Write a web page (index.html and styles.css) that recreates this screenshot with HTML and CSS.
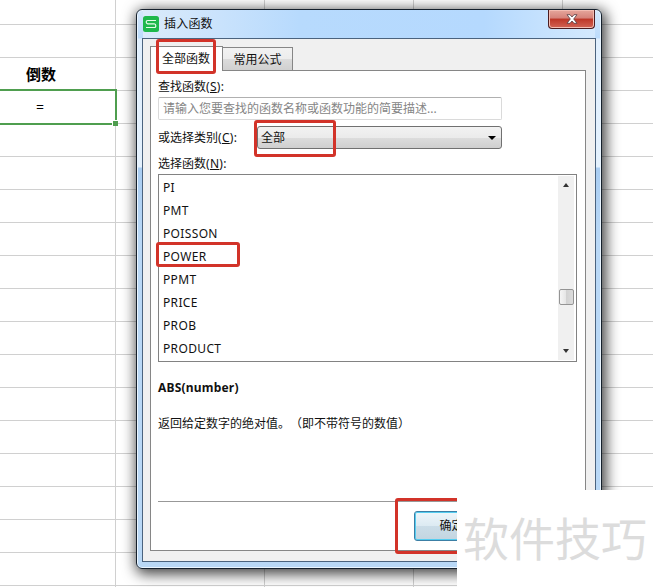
FILE: index.html
```html
<!DOCTYPE html>
<html lang="zh-CN">
<head>
<meta charset="utf-8">
<title>插入函数</title>
<link rel="stylesheet" href="styles.css">
</head>
<body>
<main class="sheet">
  <div class="cell cell-head">倒数</div>
  <div class="cell cell-active">=<span class="fill-handle"></span></div>
</main>

<section class="dialog">
  <header class="titlebar">
    <svg class="logo" viewBox="0 0 16 16"><rect width="16" height="16" rx="2.500" fill="#1fb84c"/><path d="M13 4.500H4.700Q3.200 4.500 3.200 6T4.700 7.900H11.300Q12.800 7.900 12.800 9.800T11.300 11.500H3" fill="none" stroke="#e8fbe9" stroke-width="1.200"/></svg>
    <h1 class="title">插入函数</h1>
    <button class="close"><svg viewBox="0 0 12 10"><path d="M1 .7h3l2 2.300 2-2.300h3L7.700 5 11 9.300H8L6 7 4 9.300H1L4.300 5z" fill="#fff" stroke="#543c42" stroke-width=".8"/></svg></button>
  </header>
  <div class="client">
    <nav class="tabs">
      <span class="tab tab-on">全部函数</span>
      <span class="tab tab-off">常用公式</span>
    </nav>
    <div class="panel">
      <label class="label label-search">查找函数<span class="key">(<u>S</u>):</span></label>
      <div class="search">请输入您要查找的函数名称或函数功能的简要描述...</div>
      <div class="category">
        <label class="label">或选择类别<span class="key">(<u>C</u>):</span></label>
        <div class="combo"><span>全部</span><i class="arrow arrow-combo"></i></div>
      </div>
      <label class="label label-list">选择函数<span class="key">(<u>N</u>):</span></label>
      <div class="listbox">
        <ul class="items">
          <li>PI</li><li>PMT</li><li>POISSON</li><li>POWER</li><li>PPMT</li><li>PRICE</li><li>PROB</li><li>PRODUCT</li>
        </ul>
        <div class="scrollbar"><i class="arrow arrow-up"></i><b class="thumb"></b><i class="arrow arrow-down"></i></div>
      </div>
      <p class="signature">ABS(number)</p>
      <p class="description">返回给定数字的绝对值。（即不带符号的数值）</p>
      <footer class="actions"><button class="ok">确定</button></footer>
    </div>
  </div>
</section>

<div class="mark mark-tab"></div>
<div class="mark mark-combo"></div>
<div class="mark mark-item"></div>
<div class="mark mark-ok"></div>
<div class="watermark">软件技巧</div>
</body>
</html>
```
FILE: styles.css
```css
* { box-sizing: border-box; }
body {
  margin: 0;
  width: 653px;
  height: 587px;
  position: relative;
  overflow: hidden;
  background: #fff;
  color: #111;
  font: 12px/16px "Noto Sans", "Noto Sans CJK SC", sans-serif;
}
h1, p, ul { margin: 0; padding: 0; font: inherit; }
ul { list-style: none; }
button { padding: 0; font: inherit; color: inherit; }

.sheet {
  height: 587px;
  padding-top: 58px;
  background:
    repeating-linear-gradient(90deg, #d0d0d0 0 1px, transparent 1px 149px) 115px 0 / 100% 100% no-repeat,
    repeating-linear-gradient(#d0d0d0 0 1px, transparent 1px 33px) 0 24px / 100% 100% no-repeat;
}
.cell {
  display: flex;
  align-items: center;
  justify-content: center;
  width: 117px;
  padding-right: 35px;
  color: #000;
}
.cell-head { height: 31px; font-size: 15px; font-weight: 700; }
.cell-active {
  position: relative;
  height: 36px;
  border: 2px solid #4f9e4f;
  border-left: 0;
  font-size: 14px;
}
.fill-handle {
  position: absolute;
  right: -3px;
  bottom: -3px;
  width: 6px;
  height: 6px;
  background: #4f9e4f;
  border: solid #fff;
  border-width: 1px 0 0 1px;
}

.dialog {
  position: absolute;
  left: 136px;
  top: 9px;
  display: flex;
  flex-direction: column;
  width: 466px;
  height: 560px;
  padding: 0 5px 6px;
  border: 1px solid #15202c;
  border-radius: 6px;
  background: linear-gradient(#d5e7fb 0, #bcdcfc 28px, #e0effe 29px, #e4f1fd 157px, #a9cdf2 158px, #b9d8f6 230px, #b9d8f6);
  box-shadow: inset 0 0 0 1px #eaf5ff, 2px 3px 14px 2px rgba(0, 0, 0, .75);
}
.titlebar {
  display: flex;
  align-items: center;
  flex: none;
  height: 28px;
  margin: 0 -4px;
  padding: 0 5px;
  background: linear-gradient(90deg, #dcebfb, #b7dafd 35%, #b5d9fe 75%, #d5eafe);
  background-clip: content-box;
}
.logo { width: 16px; height: 16px; }
.title { margin-left: 5px; font-size: 12px; letter-spacing: .2px; }
.close {
  display: flex;
  align-items: center;
  justify-content: center;
  align-self: flex-start;
  width: 47px;
  height: 19px;
  margin-left: auto;
  border: 1px solid #4a1c20;
  border-top: 0;
  border-radius: 0 0 4px 4px;
  background: linear-gradient(#e6a79c, #d5827a 45%, #bd3627 50%, #d26455);
  box-shadow: inset 0 0 0 1px #f3bdb3;
}
.close svg { width: 12px; height: 10px; }
.client {
  flex: 1;
  display: flex;
  flex-direction: column;
  padding: 7px 9px 10px 7px;
  border: 1px solid #4b637e;
  background: #f0f0f0;
}
.tabs { display: flex; align-items: flex-end; height: 24px; }
.tab { display: flex; justify-content: center; align-items: center; border: 1px solid #868686; border-bottom: 0; }
.tab-on { width: 73px; height: 25px; margin-bottom: -1px; padding-right: 1px; background: #fff; z-index: 1; }
.tab-off { width: 70px; height: 23px; padding-top: 2px; border-left: 0; background: linear-gradient(#f2f2f2, #ececec 50%, #dcdcdc 50%, #d0d0d0); }
.panel {
  flex: 1;
  display: flex;
  flex-direction: column;
  padding: 8px 7px 0;
  border: 1px solid #868686;
  background: #fff;
}
.label { height: 16px; white-space: nowrap; }
.key { letter-spacing: .3px; }
.search {
  width: 344px;
  height: 23px;
  margin-top: 2px;
  padding: 3px 4px;
  border: 1px solid #dadada;
  border-top-color: #b0b0b0;
  border-radius: 2px;
  color: #858585;
}
.category { display: flex; align-items: center; justify-content: space-between; width: 344px; height: 23px; margin-top: 6px; }
.combo {
  display: flex;
  align-items: center;
  justify-content: space-between;
  width: 245px;
  height: 23px;
  padding: 0 5px 0 3px;
  border: 1px solid #707070;
  border-radius: 3px;
  background: linear-gradient(#f2f2f2, #ebebeb 50%, #dddddd 50%, #cfcfcf);
}
.arrow { width: 0; height: 0; border: solid transparent; }
.arrow-combo { border-width: 4px 4px 0; border-top-color: #000; }
.arrow-up { border-width: 0 3px 4px; border-bottom-color: #333; }
.arrow-down { border-width: 4px 3px 0; border-top-color: #333; }
.label-list { margin-top: 7px; }
.listbox { display: flex; justify-content: space-between; width: 419px; height: 188px; margin-top: 2px; padding: 1px; border: 1px solid #828282; }
.items { padding-left: 3px; letter-spacing: .35px; }
.items li { height: 23px; line-height: 23px; }
.scrollbar {
  display: flex;
  flex-direction: column;
  align-items: center;
  width: 16px;
  margin-right: 1px;
  padding: 7px 0;
  background: #f0f0f0;
}
.thumb { width: 15px; height: 16px; margin-top: 102px; border: 1px solid #949494; border-radius: 2px; background: linear-gradient(90deg, #f5f5f5, #e4e4e4 50%, #d2d2d2 50%, #dcdcdc); }
.scrollbar .arrow-down { margin-top: auto; }
.signature { margin-top: 18px; font-weight: 700; letter-spacing: .2px; }
.description { margin-top: 19px; text-spacing-trim: space-all; font-family: "Noto Sans CJK SC", sans-serif; }
.actions { height: 49px; margin-top: auto; padding: 9px 0 0 256px; border-top: 1px solid #989898; }
.ok {
  width: 75px;
  height: 30px;
  border: 1px solid #3c7fa5;
  border-radius: 3px;
  background: linear-gradient(#eef6fa, #dceaf2 50%, #cbdde8 50%, #c3d5e0);
  box-shadow: inset 0 0 0 1px #55cdf0;
}

.mark { position: absolute; z-index: 2; border: 3px solid #d23329; border-radius: 3px; }
.mark-tab { left: 156px; top: 39px; width: 60px; height: 35px; }
.mark-combo { left: 254px; top: 120px; width: 82px; height: 37px; }
.mark-item { left: 156px; top: 242px; width: 84px; height: 25px; }
.mark-ok { left: 395px; top: 498px; width: 110px; height: 56px; }
.watermark {
  position: absolute;
  z-index: 3;
  left: 457px;
  top: 490px;
  width: 196px;
  height: 97px;
  padding-left: 6px;
  background: #fff;
  color: #dcdcdc;
  font: 46px/93px "Noto Sans CJK SC", sans-serif;
  white-space: nowrap;
}
```
